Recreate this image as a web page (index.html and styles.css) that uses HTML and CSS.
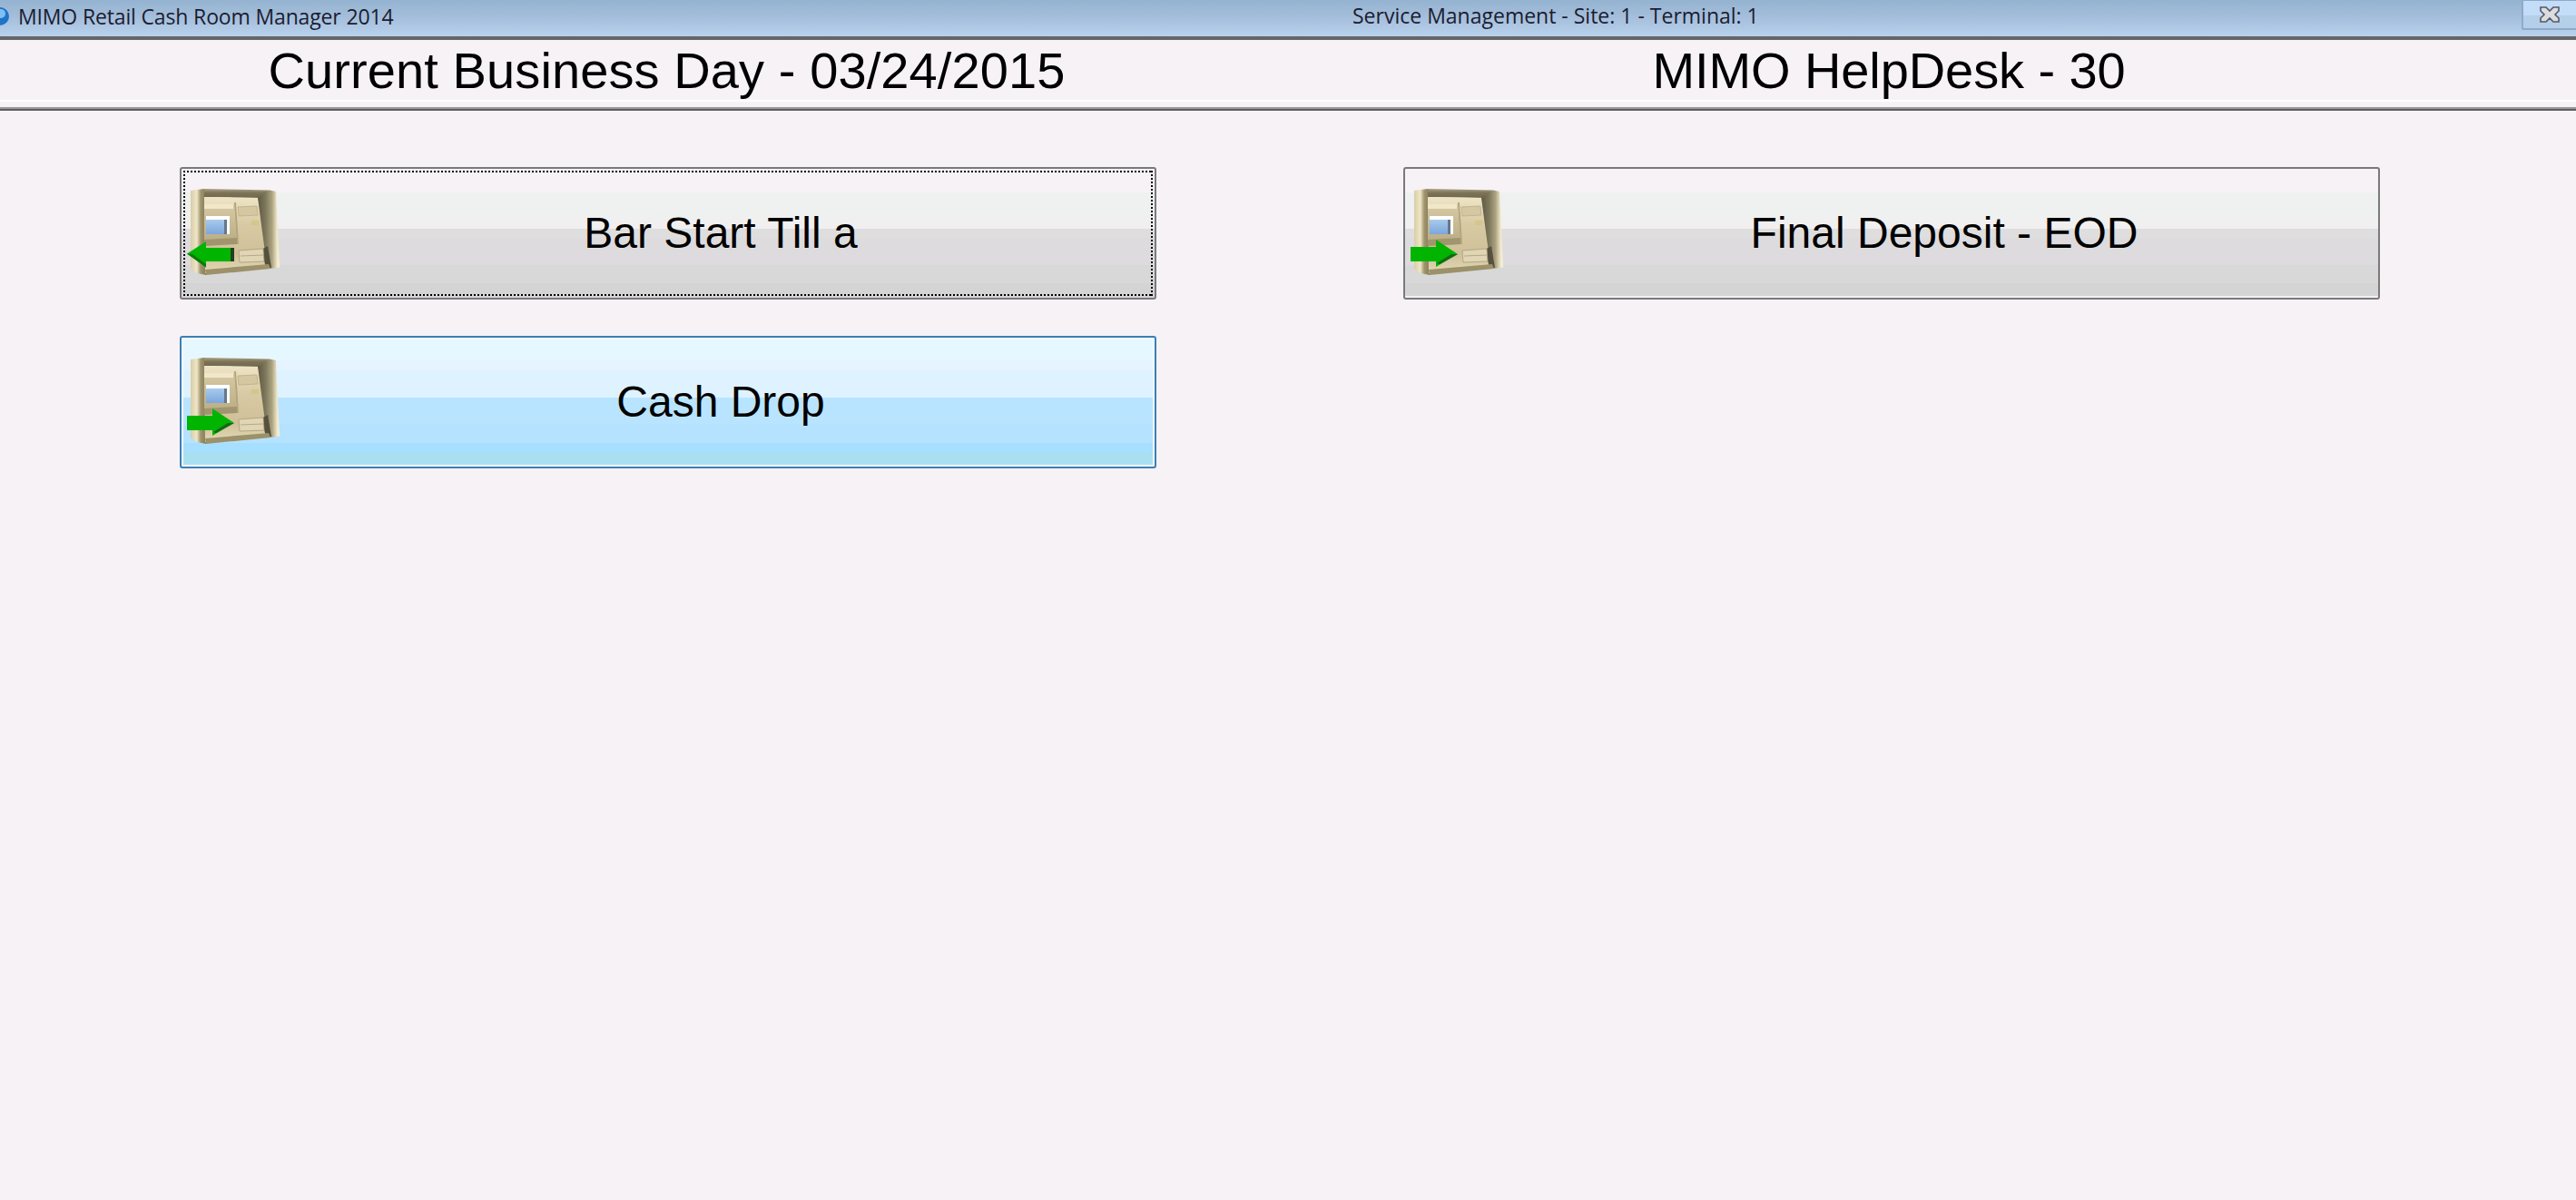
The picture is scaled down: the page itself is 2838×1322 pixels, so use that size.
FILE: index.html
```html
<!DOCTYPE html>
<html lang="en">
<head>
<meta charset="utf-8">
<title>MIMO Retail Cash Room Manager 2014</title>
<link rel="stylesheet" href="styles.css">
</head>
<body>
<svg class="defs" aria-hidden="true">
  <defs>
    <linearGradient id="sideL" x1="0" x2="1" y1="0" y2="0"><stop offset="0" stop-color="#d8cda8"/><stop offset=".4" stop-color="#efe6c6"/><stop offset=".65" stop-color="#a0956f"/><stop offset="1" stop-color="#857b58"/></linearGradient>
    <linearGradient id="sideR" x1="0" x2="1" y1="0" y2="0"><stop offset="0" stop-color="#5f5a44"/><stop offset=".35" stop-color="#7d775b"/><stop offset=".65" stop-color="#aaa280"/><stop offset=".88" stop-color="#eee6c6"/><stop offset="1" stop-color="#fbf6e0"/></linearGradient>
    <linearGradient id="hood" x1="0" x2="0" y1="0" y2="1"><stop offset="0" stop-color="#aaa185"/><stop offset=".45" stop-color="#7d7458"/><stop offset="1" stop-color="#6f674c"/></linearGradient>
    <linearGradient id="front" x1="0" x2="0" y1="0" y2="1"><stop offset="0" stop-color="#efe5c6"/><stop offset=".35" stop-color="#d8caa4"/><stop offset=".75" stop-color="#cfc098"/><stop offset="1" stop-color="#e4d9b8"/></linearGradient>
    <linearGradient id="block" x1="0" x2="0" y1="0" y2="1"><stop offset="0" stop-color="#d6c9a4"/><stop offset="1" stop-color="#b8aa82"/></linearGradient>
    <linearGradient id="screen" x1="0" x2="0" y1="0" y2="1"><stop offset="0" stop-color="#a8caec"/><stop offset="1" stop-color="#7ca6dc"/></linearGradient>
    <symbol id="atm" viewBox="0 0 104 100">
      <path d="M4 3 19 1 21 96 11 94 4 89Z" fill="url(#sideL)"/>
      <path d="M19 1 91 2.5 81 11 19 10Z" fill="url(#hood)"/>
      <path d="M19 10 81 11 89 87 20 94Z" fill="url(#front)"/>
      <path d="M91 2.5 98 4 102 87.5 92 89 88 86 78 11Z" fill="url(#sideR)"/>
      <path d="M82 68 89 64 93 88 87 88Z" fill="#55513e"/>
      <path d="M20 90 90 84 92 89 21 96Z" fill="#9c9169"/>
      <path d="M19 18 52 18 55 62 19 64Z" fill="url(#block)"/>
      <path d="M19 18 51 18 51 23 19 23Z" fill="#f1e8c9"/>
      <path d="M52 16 54 16 57 62 55 62Z" fill="#b3a67f"/>
      <path d="M19 57 55 55 55 62 19 64Z" fill="#a1956f"/>
      <path d="M21 31 47 31 47 51 21 51Z" fill="#fff"/>
      <path d="M21 35 41 35 41 51 21 51Z" fill="url(#screen)"/>
      <path d="M41 35 44 35 44 51 41 51Z" fill="#66788a"/>
      <path d="M56 21 77 20 78 30 57 31Z" fill="#d4c7a1" stroke="#bcae88" stroke-width=".8"/>
      <rect x="71" y="36" width="8" height="5" fill="#d5c689"/>
      <path d="M57 69 84 67 85 81 58 82Z" fill="#e0d6b6" stroke="#aa9d77" stroke-width=".8"/>
      <path d="M59 75 84 74" stroke="#aa9d77" stroke-width=".8" fill="none"/>
    </symbol>
    <symbol id="arrow-left" viewBox="0 0 104 100">
      <path d="M47 66 52 66 52 81 47 81Z" fill="#24401f"/>
      <path d="M0 72.5 21 59 21 66 48 66 48 81 21 81 21 87.5Z" fill="#00b400"/>
      <path d="M0 72.5 21 87.5 21 84 6 73Z" fill="#0a7a0a"/>
    </symbol>
    <symbol id="arrow-right" viewBox="0 0 104 100">
      <path d="M0 65 28 65 28 57 52 73 28 87 28 81 0 81Z" fill="#00b400"/>
      <path d="M32 84 52 73 45 73 29 83Z" fill="#1a641a"/>
    </symbol>
  </defs>
</svg>

<header class="titlebar">
  <div class="title-left">
    <svg class="app-icon" viewBox="0 0 20 20" aria-hidden="true"><circle cx="0" cy="10" r="10" fill="#1f74c8"/><circle cx="1" cy="7" r="5" fill="#7fc0f0"/></svg>
    <span class="app-name">MIMO Retail Cash Room Manager 2014</span>
  </div>
  <span class="window-title">Service Management - Site: 1 - Terminal: 1</span>
  <button class="close" type="button" aria-label="Close">
    <svg class="close-x" viewBox="0 0 22 18" aria-hidden="true"><path d="M1 1H7L11 5 15 1H21V5L17 9 21 13V17H15L11 13 7 17H1V13L5 9 1 5Z" fill="#dcdcdc" stroke="#55586a" stroke-width="1.6"/></svg>
  </button>
</header>

<section class="daybar">
  <h1 class="day-title date">Current Business Day - 03/24/2015</h1>
  <h1 class="day-title help">MIMO HelpDesk - 30</h1>
</section>
<div class="rule"></div>

<main class="actions">
  <button class="action focused" type="button">
    <span class="icon-box"><svg class="atm"><use href="#atm"/><use href="#arrow-left"/></svg></span>
    <span class="label">Bar Start Till a</span>
  </button>
  <button class="action" type="button">
    <span class="icon-box"><svg class="atm"><use href="#atm"/><use href="#arrow-right"/></svg></span>
    <span class="label">Final Deposit - EOD</span>
  </button>
  <button class="action hot" type="button">
    <span class="icon-box"><svg class="atm"><use href="#atm"/><use href="#arrow-right"/></svg></span>
    <span class="label">Cash Drop</span>
  </button>
</main>
</body>
</html>
```

FILE: styles.css
```css
html, body {
  margin: 0;
  padding: 0;
  height: 100%;
  background: #f6f2f6;
  overflow: hidden;
}

body {
  font-family: "Liberation Sans", Arial, sans-serif;
  color: #000;
}

.defs {
  display: block;
  width: 0;
  height: 0;
}

.titlebar {
  display: flex;
  align-items: flex-start;
  height: 40px;
  background: linear-gradient(#94b3d0, #a5bfdc 50%, #b8d2ee);
  border-bottom: 4px solid #666;
  font-family: "Open Sans", sans-serif;
  font-size: 23px;
  line-height: 34px;
  color: #1c1c30;
  white-space: nowrap;
}

.title-left {
  display: flex;
  align-items: center;
  width: 1490px;
  height: 36px;
}

.app-icon {
  width: 20px;
  height: 20px;
  flex: none;
}

.app-name {
  letter-spacing: -0.15px;
}

.window-title {
  flex: 1;
}

.close {
  flex: none;
  width: 60px;
  height: 33px;
  margin: 0;
  padding: 0;
  display: flex;
  align-items: center;
  justify-content: center;
  background: linear-gradient(#c3dcf8 0 55%, #b4cfe8 55% 100%);
  border: 1px solid #8fa9cc;
  border-width: 1px 0 2px 2px;
  border-radius: 2px 0 0 2px;
}

.close-x {
  width: 22px;
  height: 18px;
}

.daybar {
  display: grid;
  grid-template-columns: 1076px 1076px;
  column-gap: 272px;
  padding-left: 198px;
  height: 66px;
  border-bottom: 2px solid #fff;
}

.day-title {
  margin: 0;
  font-size: 56px;
  font-weight: 400;
  line-height: 68px;
  text-align: center;
  white-space: nowrap;
}

.date {
  letter-spacing: 0.1px;
  padding-right: 3px;
}

.help {
  letter-spacing: -0.1px;
  padding-right: 6px;
}

.rule {
  height: 4px;
  margin-top: 6px;
  background: linear-gradient(#999 0 50%, #5f5f5f 50% 100%);
}

.actions {
  display: grid;
  grid-template-columns: 1076px 1076px;
  grid-auto-rows: 146px;
  column-gap: 272px;
  row-gap: 40px;
  padding: 62px 0 0 198px;
}

.action {
  position: relative;
  display: flex;
  align-items: center;
  margin: 0;
  padding: 0;
  box-sizing: border-box;
  font-family: inherit;
  color: #000;
  border: 2px solid #7a7a7a;
  border-radius: 3px;
  background: linear-gradient(
    #f6f2f6 0 26px,
    #eff0f0 26px 56px,
    #f2eff0 56px 66px,
    #dedede 66px 76px,
    #dddbdd 76px 106px,
    #d8d8d8 106px 126px,
    #d4d4d4 126px 100%
  );
  box-shadow: inset 0 -2px 0 #f2f0f2;
}

.hot {
  border-color: #3c7fb4;
  background: linear-gradient(
    #e6f8ff 0 25px,
    #e6f4ff 25px 36px,
    #dff2ff 36px 66px,
    #b9e4ff 66px 95px,
    #b5e2ff 95px 116px,
    #a6dfff 116px 126px,
    #a8e0f2 126px 100%
  );
  box-shadow: inset 0 0 0 2px #f2fbff;
}

.focused {
  box-shadow: none;
}

.focused::after {
  content: "";
  position: absolute;
  inset: 2px;
  background:
    repeating-linear-gradient(90deg, #000 0 2px, transparent 2px 4px) top / 100% 2px no-repeat,
    repeating-linear-gradient(90deg, #000 0 2px, transparent 2px 4px) bottom / 100% 2px no-repeat,
    repeating-linear-gradient(#000 0 2px, transparent 2px 4px) left / 2px 100% no-repeat,
    repeating-linear-gradient(#000 0 2px, transparent 2px 4px) right / 2px 100% no-repeat;
}

.icon-box {
  flex: none;
  width: 116px;
  height: 100px;
  padding-left: 6px;
  box-sizing: border-box;
}

.atm {
  display: block;
  width: 104px;
  height: 100px;
  filter: blur(0.7px);
}

.label {
  flex: 1;
  min-width: 0;
  font-size: 48px;
  line-height: 1;
  text-align: center;
  white-space: nowrap;
}
```
